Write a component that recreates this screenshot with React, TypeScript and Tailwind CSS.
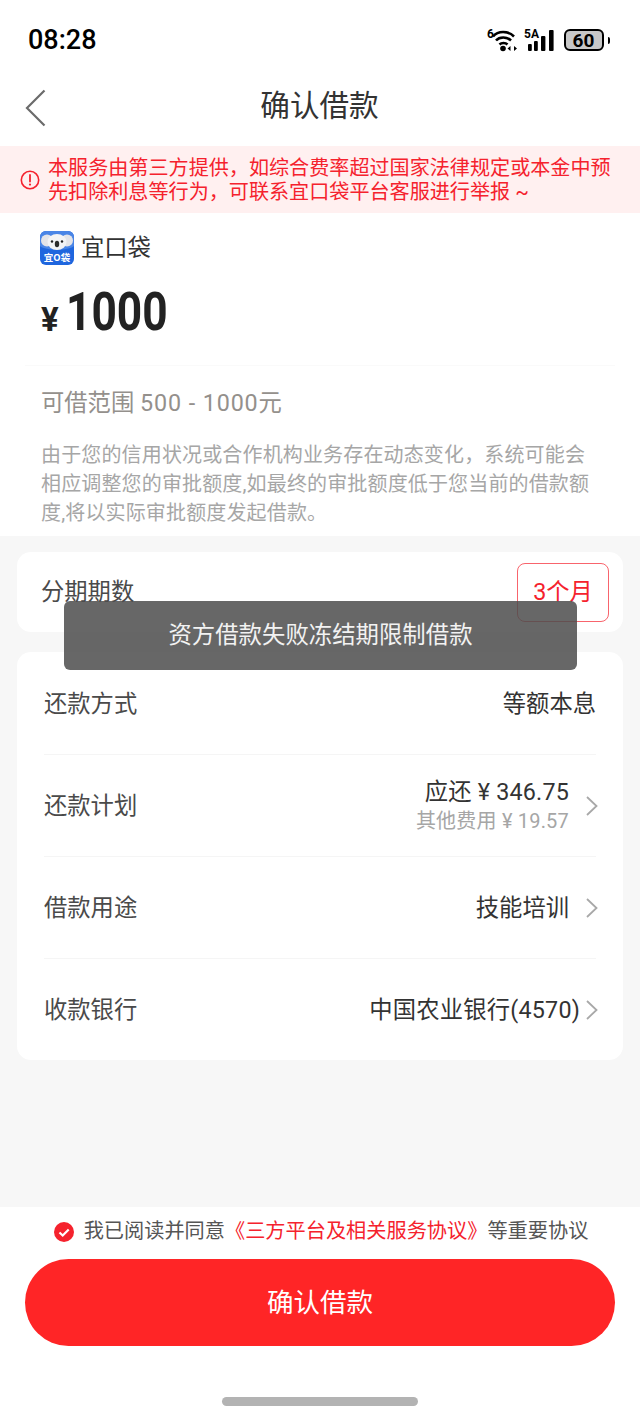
import React from 'react';

const FONT = "font-['Roboto','Noto_Sans_CJK_SC',sans-serif]";

const Arrow = () => (
  <svg width="14" height="22" viewBox="0 0 14 22" fill="none" className="shrink-0">
    <path d="M2 2l9.5 9L2 20" stroke="#a8a8a8" strokeWidth="1.8" />
  </svg>
);

const StatusIcons = () => (
  <div className="flex items-center text-black">
    <svg width="31" height="24" viewBox="0 0 31 24">
      <text x="0" y="10" fontSize="12" fontWeight="700" fontFamily="Roboto">6</text>
      <path d="M6 8.5C11 2.5 21 2.5 27 8.5" stroke="#000" strokeWidth="2.6" fill="none" />
      <path d="M9 12.5C12.5 8.5 20 8.5 24 12.5" stroke="#000" strokeWidth="2.6" fill="none" />
      <path d="M12.5 16.5C14.5 14.5 18.5 14.5 20.5 16.5" stroke="#000" strokeWidth="2.6" fill="none" />
      <circle cx="16" cy="20.5" r="2.8" fill="#000" />
      <path d="M20.5 20.5l3-2.5v5zM30 20.5l-3-2.5v5z" fill="#000" />
    </svg>
    <svg width="31" height="24" viewBox="0 0 31 24" className="ml-[6px]">
      <text x="0" y="10" fontSize="12" fontWeight="700" fontFamily="Roboto">5A</text>
      <rect x="4" y="16" width="3.8" height="7" rx="1" fill="#000" />
      <rect x="10" y="13" width="3.8" height="10" rx="1" fill="#000" />
      <rect x="17" y="8" width="4.4" height="15" rx="1" fill="#000" />
      <rect x="25" y="2" width="4.6" height="21" rx="1" fill="#000" />
    </svg>
    <div className="flex items-center gap-[4px] ml-[9px]">
      <div className="w-[40px] h-[22px] rounded-[6px] border-2 border-black bg-[#c8c8c8] flex items-center justify-center text-[19px] font-bold leading-none">
        60
      </div>
      <div className="w-[2.5px] h-[7px] bg-black rounded-r-sm" />
    </div>
  </div>
);

const KoalaLogo = () => (
  <svg width="34" height="34" viewBox="0 0 34 34" className="shrink-0">
    <rect width="34" height="34" rx="6" fill="#1f66de" />
    <path d="M0 6a6 6 0 0 1 6-6h22a6 6 0 0 1 6 6v9c-6 5-28 5-34 0z" fill="#4a85e6" />
    <ellipse cx="7" cy="9.5" rx="6" ry="6" fill="#e4e4e8" />
    <ellipse cx="27" cy="9.5" rx="6" ry="6" fill="#e4e4e8" />
    <ellipse cx="17" cy="11" rx="9.5" ry="8" fill="#f3f3f5" />
    <circle cx="12" cy="10.5" r="1.2" fill="#222" />
    <circle cx="22" cy="10.5" r="1.2" fill="#222" />
    <ellipse cx="17" cy="13" rx="2.2" ry="3.2" fill="#2b2b2b" />
    <text x="17" y="29.5" textAnchor="middle" fontSize="9.5" fontWeight="700" fill="#fff" fontFamily="Noto Sans CJK SC">宜O袋</text>
  </svg>
);

const Row = ({ label, children, last }: { label: string; children: React.ReactNode; last?: boolean }) => (
  <div className={`flex items-center justify-between pt-[1px] ${last ? 'h-[101px]' : 'h-[102px] border-b border-[#f5f5f5]'}`}>
    <span className="text-[23.3px] text-[#4a4a4a]">{label}</span>
    {children}
  </div>
);

export default function App() {
  return (
    <div className={`relative w-[640px] h-[1416px] bg-white flex flex-col overflow-hidden ${FONT}`}>
      {/* status bar */}
      <div className="h-[72px] pl-[28px] pr-[30px] pt-[8px] flex items-center justify-between shrink-0">
        <span className="text-[27px] font-medium text-black leading-none">08:28</span>
        <StatusIcons />
      </div>

      {/* nav */}
      <div className="h-[74px] shrink-0 grid grid-cols-[1fr_auto_1fr] items-center pl-[25px] pb-[6px]">
        <svg width="22" height="38" viewBox="0 0 22 38" fill="none" className="mt-[4px]">
          <path d="M19.5 1.5L2 19l17.5 17.5" stroke="#6b6b6b" strokeWidth="2.2" />
        </svg>
        <span className="text-[29.6px] text-[#333333] -translate-x-[13px]">确认借款</span>
        <span />
      </div>

      {/* notice */}
      <div className="h-[67px] shrink-0 bg-[#fff0f0] pl-[20px] pr-[20px] flex items-center gap-[8px]">
        <svg width="20" height="20" viewBox="0 0 20 20" fill="none" className="shrink-0">
          <circle cx="10" cy="10" r="8.7" stroke="#f5222d" strokeWidth="1.6" />
          <path d="M10 5v6.5" stroke="#f5222d" strokeWidth="1.8" strokeLinecap="round" />
          <circle cx="10" cy="14.6" r="1.1" fill="#f5222d" />
        </svg>
        <p className="text-[20.1px] leading-[24px] text-[#f5222d] whitespace-pre-line">
          {'本服务由第三方提供，如综合费率超过国家法律规定或本金中预\n先扣除利息等行为，可联系宜口袋平台客服进行举报 ~'}
        </p>
      </div>

      {/* amount */}
      <div className="h-[323px] shrink-0 px-[40px]">
        <div className="flex items-center gap-[7px] h-[34px] mt-[18px]">
          <KoalaLogo />
          <span className="text-[23.3px] text-[#333333]">宜口袋</span>
        </div>
        <div className="flex items-center h-[62px] mt-[18px] pl-[1px] pb-[4px]">
          <span className="text-[33px] font-bold text-[#222222] leading-none mr-[7px] mt-[14px]">¥</span>
          <span className="inline-block text-[54px] font-bold text-[#222222] leading-none origin-left scale-x-[0.82]">1000</span>
        </div>
        <div className="border-t border-[#fafafa] mt-[20px] -mx-[15px]" />
        <p className="text-[23.3px] text-[#94908c] mt-[19px] leading-[36px] pl-[1px]">
          可借范围 <span className="tracking-[0.9px]">500 - 1000元</span>
        </p>
        <p className="text-[20px] leading-[29px] text-[#a6a6a6] mt-[20px] tracking-[0.15px] pl-[1px]">
          由于您的信用状况或合作机构业务存在动态变化，系统可能会相应调整您的审批额度,如最终的审批额度低于您当前的借款额度,将以实际审批额度发起借款。
        </p>
      </div>

      {/* body */}
      <div className="flex-1 bg-[#f7f7f7] px-[17px] pt-[16px]">
        <div className="h-[80px] bg-white rounded-[14px] flex items-center justify-between pl-[24px] pr-[14px]">
          <span className="text-[23.3px] text-[#4a4a4a]">分期期数</span>
          <div className="w-[92px] h-[59px] rounded-[8px] border border-[#f5222d]/70 flex items-center justify-center text-[23.3px] text-[#f5222d] mt-[1px]">
            3个月
          </div>
        </div>
        <div className="mt-[20px] bg-white rounded-[14px] px-[27px] pt-[1px]">
          <Row label="还款方式">
            <span className="text-[23.3px] text-[#333333]">等额本息</span>
          </Row>
          <Row label="还款计划">
            <div className="flex items-center gap-[16px] mr-[-3px]">
              <div className="text-right">
                <p className="text-[23.3px] text-[#333333] leading-[28px] tracking-[0.2px]">应还 ¥ 346.75</p>
                <p className="text-[20px] text-[#a6a6a6] leading-[28px] tracking-[0.2px] mt-[1px]">其他费用 ¥ 19.57</p>
              </div>
              <Arrow />
            </div>
          </Row>
          <Row label="借款用途">
            <div className="flex items-center gap-[16px] mr-[-3px]">
              <span className="text-[23.3px] text-[#333333]">技能培训</span>
              <Arrow />
            </div>
          </Row>
          <Row label="收款银行" last>
            <div className="flex items-center gap-[5px] mr-[-3px]">
              <span className="text-[23.3px] text-[#333333] tracking-[0.2px]">中国农业银行(4570)</span>
              <Arrow />
            </div>
          </Row>
        </div>
      </div>

      {/* footer */}
      <div className="h-[209px] shrink-0 bg-white px-[25px]">
        <div className="h-[52px] pb-[4px] pl-[2px] flex items-center justify-center text-[20.2px] text-[#555555] whitespace-nowrap">
          <svg width="20" height="20" viewBox="0 0 20 20" className="mr-[10px] shrink-0 mt-[2px]">
            <circle cx="10" cy="10" r="10" fill="#f5222d" />
            <path d="M5.5 10.5l3.2 3 6-6" stroke="#fff" strokeWidth="2.2" fill="none" />
          </svg>
          我已阅读并同意<span className="text-[#f5222d]">《三方平台及相关服务协议》</span>等重要协议
        </div>
        <button className="w-[590px] h-[87px] rounded-full bg-[#ff2526] text-white text-[26.5px] block">确认借款</button>
        <div className="mt-[51px] mx-auto w-[196px] h-[9px] rounded-full bg-[#b3b3b3]" />
      </div>

      {/* toast */}
      <div className="absolute left-[64px] top-[601px] w-[513px] h-[69px] rounded-[6px] bg-[#4c4c4c]/85 flex items-center justify-center text-[23.4px] text-[#f2f2f2]">
        资方借款失败冻结期限制借款
      </div>
    </div>
  );
}
